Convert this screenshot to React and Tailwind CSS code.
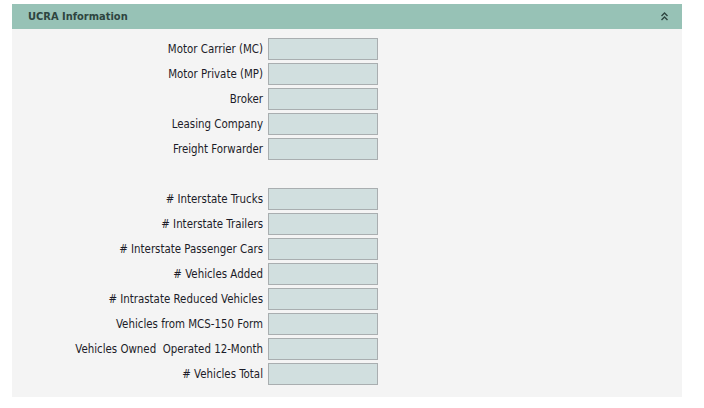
export default function App() {
  const group1 = [
    "Motor Carrier (MC)",
    "Motor Private (MP)",
    "Broker",
    "Leasing Company",
    "Freight Forwarder",
  ];
  const group2 = [
    "# Interstate Trucks",
    "# Interstate Trailers",
    "# Interstate Passenger Cars",
    "# Vehicles Added",
    "# Intrastate Reduced Vehicles",
    "Vehicles from MCS-150 Form",
    "Vehicles Owned\u00a0 Operated 12-Month",
    "# Vehicles Total",
  ];
  const Row = ({ label }) => (
    <div className="flex h-[25px] items-start">
      <div className="w-[256px] h-[22px] flex items-center justify-end pr-[5px] pt-[1px] text-[11.4px] text-[#1c1c28] whitespace-nowrap">
        {label}
      </div>
      <div className="w-[110px] h-[22px] border border-[#a9aeb0] bg-[#d1dfdf]" />
    </div>
  );
  return (
    <div
      className="w-[704px] h-[408px] bg-white pt-[4px] pl-[12px]"
      style={{ fontFamily: '"DejaVu Sans Condensed", "DejaVu Sans", "Liberation Sans", sans-serif', fontStretch: "condensed" }}
    >
      <div className="w-[670px] h-[393px] bg-[#f4f4f4]">
        <div className="h-[25px] bg-[#97c2b6] flex items-center justify-between pl-[16px] pr-[14px]">
          <span className="text-[11px] font-bold text-[#2e4540] pt-[1px]">UCRA Information</span>
          <svg width="7" height="9" viewBox="0 0 7 9" className="text-[#2e4540]">
            <path d="M0.5 4 L3.5 1 L6.5 4" fill="none" stroke="currentColor" strokeWidth="1.4" />
            <path d="M0.5 8 L3.5 5 L6.5 8" fill="none" stroke="currentColor" strokeWidth="1.4" />
          </svg>
        </div>
        <div className="pt-[9px]">
          {group1.map((l) => (
            <Row key={l} label={l} />
          ))}
          <div className="h-[25px]" />
          {group2.map((l) => (
            <Row key={l} label={l} />
          ))}
        </div>
      </div>
    </div>
  );
}
